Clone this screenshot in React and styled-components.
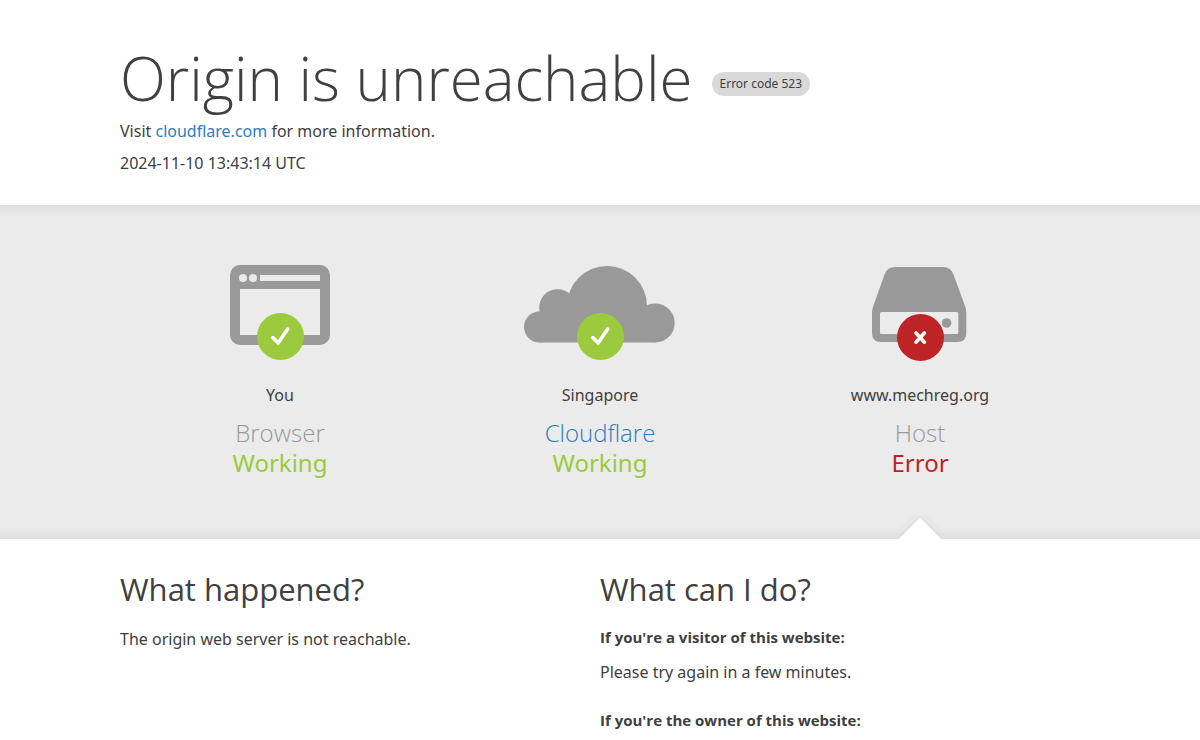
import styled, { createGlobalStyle } from "styled-components";

const GlobalStyle = createGlobalStyle`
* {
  box-sizing: border-box;
}

body {
  margin: 0;
  background-color: #fff;
  color: #404040;
  font-family: "Noto Sans", "Open Sans", sans-serif;
  font-size: 16px;
  line-height: 24px;
}

h1, h2, h3, p {
  margin: 0;
}

h1, h2, h3 {
  font-family: "Open Sans", "Noto Sans", sans-serif;
}
`;

const Container = styled.div`
width: 100%;
max-width: 960px;
margin: 0 auto;
`;

const Header = styled.header`
padding: 42px 0 30px;
`;

const TitleRow = styled.div`
display: flex;
align-items: center;
flex-wrap: wrap;
gap: 19px;
margin-bottom: 5px;
`;

const Title = styled.h1`
font-size: 60px;
line-height: 72px;
font-weight: 300;
`;

const ErrorCode = styled.span`
margin-top: 12px;
padding: 0 8px;
border-radius: 12px;
background-color: #d9d9d9;
font-size: 12px;
line-height: 24px;
`;

const HeaderText = styled.p`
font-size: 16px;
line-height: 24px;

& + & {
  margin-top: 8px;
}
`;

const Link = styled.a`
color: #2f7bbf;
text-decoration: none;
`;

const StatusBand = styled.section`
background: linear-gradient(#dedede, #ebebeb 10px, #ebebeb calc(100% - 10px), #dedede);
`;

const StatusGrid = styled(Container)`
display: grid;
grid-template-columns: repeat(3, 1fr);
`;

const StatusItem = styled.div`
position: relative;
padding: 60px 0 61px;
display: flex;
flex-direction: column;
align-items: center;
text-align: center;

/* notch that points down to the failing part */
&::after {
  content: "";
  display: ${({ $pointer }) => ($pointer ? "block" : "none")};
  position: absolute;
  left: 50%;
  bottom: -15px;
  width: 30px;
  height: 30px;
  background-color: #fff;
  box-shadow: 0 0 8px #d4d4d4;
  transform: translateX(-50%) rotate(45deg);
}
`;

const Place = styled.span`
margin-top: 22px;
font-size: 16px;
line-height: 24px;
`;

const Part = styled.h3`
margin-top: 11px;
font-size: 24px;
line-height: 30px;
font-weight: 300;
color: #999;
`;

const State = styled.span`
color: ${({ $error }) => ($error ? "#bd2426" : "#9bca3e")};
font-size: 24px;
line-height: 30px;
`;

const Details = styled.section`
position: relative;
background-color: #fff;
`;

const DetailsGrid = styled(Container)`
display: grid;
grid-template-columns: repeat(2, 1fr);
padding: 30px 0;
`;

const Heading = styled.h2`
margin-bottom: 18px;
font-size: 31px;
line-height: 40px;
font-weight: 400;
`;

const SubHeading = styled.h3`
margin-bottom: 13px;
font-size: 15px;
line-height: 20px;
font-weight: 700;
`;

const Text = styled.p`
margin-bottom: 26px;
font-size: 16px;
line-height: 24px;
`;

const Badge = ({ error }) => (
  <>
    <circle cx="76.5" cy={error ? 72.5 : 71.5} r="23.5" fill={error ? "#bd2426" : "#9bca3e"} />
    <path
      d={error ? "M72 68l8.4 9.2M80.4 68L72 77.2" : "M68.8 72.6l5.4 5.4 9.4-14"}
      fill="none"
      stroke="#fff"
      strokeWidth="3.6"
      strokeLinecap="round"
      strokeLinejoin="round"
    />
  </>
);

const BrowserIcon = () => (
  <>
    <rect x="26" width="100" height="80" rx="10" fill="#999" />
    <g fill="#ebebeb">
      <circle cx="39" cy="13" r="4" />
      <circle cx="49" cy="13" r="4" />
      <path d="M56 10h60v6H56zM36 24h80v46H36z" />
    </g>
  </>
);

const CloudIcon = () => (
  <g fill="#999">
    <circle cx="15.5" cy="62" r="15.5" />
    <circle cx="33.5" cy="42.5" r="18.3" />
    <circle cx="83" cy="41" r="40" />
    <circle cx="131.2" cy="58" r="19.5" />
    <path d="M15.5 46h115.5v31.5H15.5z" />
  </g>
);

const HostIcon = () => (
  <>
    <path
      d="M51 2h48q8 0 10.5 7.5L121 41q1.3 3 1.3 7v20q0 9-9 9H37q-9 0-9-9V48q0-4 1.3-7L40.5 9.5Q43 2 51 2z"
      fill="#999"
    />
    <rect x="36" y="47" width="78.3" height="22" rx="1.5" fill="#ebebeb" />
    <circle cx="102.6" cy="58" r="4.8" fill="#999" />
  </>
);

const statuses = [
  { place: "You", part: "Browser", icon: BrowserIcon },
  { place: "Singapore", part: "Cloudflare", icon: CloudIcon, href: "#cloudflare" },
  { place: "www.mechreg.org", part: "Host", icon: HostIcon, error: true },
];

const Status = ({ place, part, icon: Icon, href, error = false }) => {
  return (
    <StatusItem $pointer={error}>
      <svg width="152" height="96" viewBox="0 0 152 96" aria-hidden="true">
        <Icon />
        <Badge error={error} />
      </svg>
      <Place>{place}</Place>
      <Part>{href ? <Link href={href}>{part}</Link> : part}</Part>
      <State $error={error}>{error ? "Error" : "Working"}</State>
    </StatusItem>
  )
}

export default function App() {
  return (
    <>
      <GlobalStyle />
      <Header>
        <Container>
          <TitleRow>
            <Title>Origin is unreachable</Title>
            <ErrorCode>Error code 523</ErrorCode>
          </TitleRow>
          <HeaderText>
            Visit <Link href="#cloudflare">cloudflare.com</Link> for more information.
          </HeaderText>
          <HeaderText>2024-11-10 13:43:14 UTC</HeaderText>
        </Container>
      </Header>
      <StatusBand>
        <StatusGrid>
          {statuses.map(el => (
            <Status key={el.part} {...el} />
          ))}
        </StatusGrid>
      </StatusBand>
      <Details>
        <DetailsGrid>
          <div>
            <Heading>What happened?</Heading>
            <Text>The origin web server is not reachable.</Text>
          </div>
          <div>
            <Heading>What can I do?</Heading>
            <SubHeading>If you're a visitor of this website:</SubHeading>
            <Text>Please try again in a few minutes.</Text>
            <SubHeading>If you're the owner of this website:</SubHeading>
          </div>
        </DetailsGrid>
      </Details>
    </>
  )
}
